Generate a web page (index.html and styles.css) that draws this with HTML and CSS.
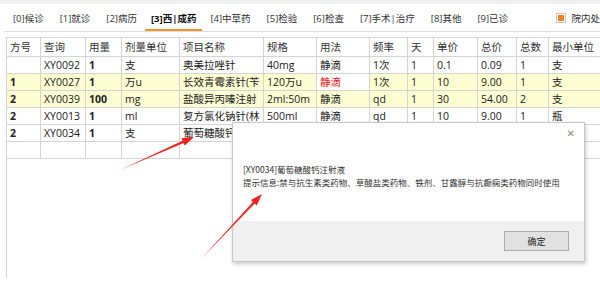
FILE: index.html
```html
<!DOCTYPE html>
<html lang="zh-CN">
<head>
    <meta charset="UTF-8">
    <title>西成药处方</title>
    <link rel="stylesheet" href="styles.css">
</head>
<body>
<div class="topstrip"></div>
<div class="tabs">
    <span class="tab">[0]候诊</span>
    <span class="tab">[1]就诊</span>
    <span class="tab">[2]病历</span>
    <span class="tab active">[3]西|成药</span>
    <span class="tab">[4]中草药</span>
    <span class="tab">[5]检验</span>
    <span class="tab">[6]检查</span>
    <span class="tab">[7]手术|治疗</span>
    <span class="tab">[8]其他</span>
    <span class="tab">[9]已诊</span>
    <label class="inner"><span class="chk"></span>院内处</label>
</div>

<div class="grid">
    <table>
        <colgroup>
            <col style="width:34px"><col style="width:45px"><col style="width:36px"><col style="width:58px">
            <col style="width:84px"><col style="width:53px"><col style="width:53px"><col style="width:38px">
            <col style="width:26px"><col style="width:44px"><col style="width:39px"><col style="width:32px">
            <col style="width:60px">
        </colgroup>
        <thead>
            <tr><th>方号</th><th>查询</th><th>用量</th><th>剂量单位</th><th>项目名称</th><th>规格</th><th>用法</th><th>频率</th><th>天</th><th>单价</th><th>总价</th><th>总数</th><th>最小单位</th></tr>
        </thead>
        <tbody>
            <tr><td class="b"></td><td>XY0092</td><td class="b">1</td><td>支</td><td>奥美拉唑针</td><td>40mg</td><td>静滴</td><td>1次</td><td>1</td><td>0.1</td><td>0.09</td><td>1</td><td>支</td></tr>
            <tr class="mark"><td class="b">1</td><td>XY0027</td><td class="b">1</td><td>万u</td><td>长效青霉素针(苄</td><td>120万u</td><td class="edit">静滴</td><td>1次</td><td>1</td><td>10</td><td>9.00</td><td>1</td><td>支</td></tr>
            <tr class="mark"><td class="b">2</td><td>XY0039</td><td class="b">100</td><td>mg</td><td>盐酸异丙嗪注射</td><td>2ml:50m</td><td>静滴</td><td>qd</td><td>1</td><td>30</td><td>54.00</td><td>2</td><td>支</td></tr>
            <tr><td class="b">2</td><td>XY0013</td><td class="b">1</td><td>ml</td><td>复方氯化钠针(林</td><td>500ml</td><td>静滴</td><td>qd</td><td>1</td><td>10</td><td>9.00</td><td>1</td><td>瓶</td></tr>
            <tr><td class="b">2</td><td>XY0034</td><td class="b">1</td><td>支</td><td>葡萄糖酸钙注射液</td><td>10ml</td><td>静滴</td><td>qd</td><td>1</td><td>5</td><td>5.00</td><td>1</td><td>支</td></tr>
            <tr><td></td><td></td><td></td><td></td><td></td><td></td><td></td><td></td><td></td><td></td><td></td><td></td><td></td></tr>
        </tbody>
    </table>
</div>

<div class="dialog">
    <div class="dlg-head"><span class="close">&#x2715;</span></div>
    <div class="dlg-body">
        <p>[XY0034]葡萄糖酸钙注射液</p>
        <p>提示信息:禁与抗生素类药物、草酸盐类药物、铁剂、甘露醇与抗癫痫类药物同时使用</p>
    </div>
    <div class="dlg-foot"><button type="button">确定</button></div>
</div>

<!-- annotation arrows -->
<svg class="marks" width="600" height="285" viewBox="0 0 600 285">
    <polygon points="120,170 183.5,143 184.7,145.5 194,137 181.4,138.2 182.6,140.8" fill="#f5201c"/>
    <polygon points="202,258 254.7,203.6 256.7,205.5 262,194 250.9,200 252.9,201.9" fill="#f5201c"/>
</svg>
</body>
</html>
```

FILE: styles.css
```css
body {
    margin: 0;
    width: 600px;
    height: 285px;
    overflow: hidden;
    position: relative;
    background: #fff;
    font-family: "Open Sans", "Noto Sans CJK SC", sans-serif;
    color: #222;
}

.topstrip {
    height: 4px;
    background: #f0f0f0;
}

.tabs {
    display: flex;
    width: 596px;
    height: 27px;
    margin-left: 4px;
    border-bottom: 1px solid #dcdcdc;
    font-size: 9.5px;
    color: #333;
}

.tab {
    display: flex;
    align-items: center;
    padding: 0 8px;
    white-space: nowrap;
}

.tab:first-child {
    margin-left: 1px;
}

.tab.active {
    font-weight: bold;
    color: #111;
    padding: 0 6px;
    box-shadow: inset 0 -2px 0 #f39425;
}

.inner {
    display: flex;
    align-items: center;
    gap: 5px;
    margin-left: auto;
    white-space: nowrap;
}

.chk {
    width: 8px;
    height: 8px;
    border: 1px solid #c8c8c8;
    background: #fff;
    display: flex;
    align-items: center;
    justify-content: center;
}

.chk::after {
    content: "";
    width: 6px;
    height: 6px;
    background: #f5821f;
}

.grid {
    margin: 5px 0 0 6px;
    height: 241px;
    border-left: 1px solid #d4d4d4;
}

table {
    border-collapse: separate;
    border-spacing: 0;
    table-layout: fixed;
    width: 602px;
    font-size: 10.5px;
}

th, td {
    padding: 0 3px;
    border-right: 1px solid #d4d4d4;
    border-bottom: 1px solid #d4d4d4;
    white-space: nowrap;
    overflow: hidden;
    text-align: left;
}

th {
    font-weight: normal;
    color: #333;
    line-height: 18px;
    border-top: 1px solid #d4d4d4;
}

td {
    line-height: 16px;
    height: 16px;
}

td.b {
    font-weight: bold;
}

tr.mark td {
    background: #fdfdd2;
}

tr.mark td.edit {
    background: #fff;
    color: #f01010;
}

.dialog {
    position: absolute;
    left: 232px;
    top: 122px;
    width: 351px;
    height: 138px;
    border: 1px solid #c6c6c6;
    background: #fff;
    box-shadow: 1px 2px 4px rgba(0, 0, 0, 0.22);
    display: flex;
    flex-direction: column;
}

.dlg-head {
    height: 20px;
    display: flex;
    justify-content: flex-end;
    align-items: center;
    padding-right: 9px;
}

.close {
    font-family: "DejaVu Sans", sans-serif;
    font-size: 10px;
    color: #888;
}

.dlg-body {
    flex: 1;
    padding: 20px 0 0 10px;
    font-size: 8.5px;
    color: #333;
    font-family: "Noto Sans CJK SC", sans-serif;
}

.dlg-body p {
    margin: 0;
    line-height: 13px;
}

.dlg-foot {
    height: 40px;
    background: #f0f0f0;
    display: flex;
    justify-content: flex-end;
    align-items: center;
    padding-right: 15px;
}

.dlg-foot button {
    width: 65px;
    height: 20px;
    background: #e1e1e1;
    border: 1px solid #adadad;
    font-family: "Noto Sans CJK SC", sans-serif;
    font-size: 9px;
    color: #222;
    padding: 0;
}

.marks {
    position: absolute;
    left: 0;
    top: 0;
    pointer-events: none;
}
```
